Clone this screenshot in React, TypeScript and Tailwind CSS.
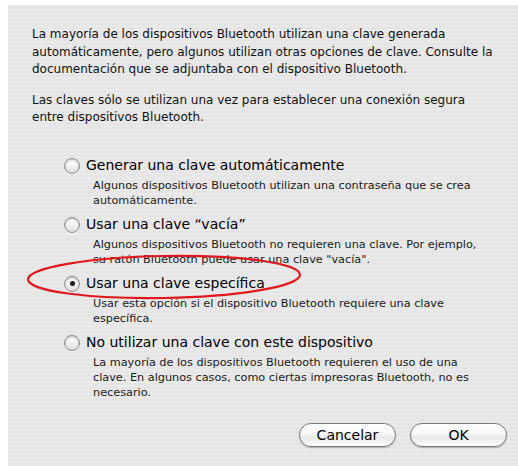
import React from "react";

const font = { fontFamily: '"DejaVu Sans", Verdana, sans-serif' };

type OptionProps = {
  label: string;
  lines: string[];
  checked?: boolean;
};

function Radio({ checked }: { checked?: boolean }) {
  return (
    <div className="relative flex h-[16px] w-[16px] shrink-0 items-center justify-center rounded-full border border-[#8c8c8c] bg-[linear-gradient(180deg,#ffffff_0%,#f4f4f4_45%,#dedede_100%)] shadow-[inset_0_1px_2px_rgba(0,0,0,0.25),0_1px_0_rgba(255,255,255,0.8)]">
      {checked && <div className="h-[5px] w-[5px] rounded-full bg-[#1c1c1c]" />}
    </div>
  );
}

function Option({ label, lines, checked }: OptionProps) {
  return (
    <div className="flex flex-col">
      <div className="flex h-[24px] items-center">
        <Radio checked={checked} />
        <span className="ml-[6px] whitespace-nowrap text-[14px] text-black">
          {label}
        </span>
      </div>
      <div className="flex flex-col pl-[29px] text-[11.25px] leading-[15px] text-[#1a1a1a]">
        {lines.map((line) => (
          <span key={line} className="whitespace-nowrap">
            {line}
          </span>
        ))}
      </div>
    </div>
  );
}

function PillButton({ children }: { children: React.ReactNode }) {
  return (
    <button className="flex h-[24px] w-[97px] items-center justify-center rounded-full border border-[#7a7a7a] bg-[linear-gradient(180deg,#ffffff_0%,#f6f6f6_50%,#e9e9e9_55%,#fbfbfb_100%)] text-[14px] text-black shadow-[0_1px_1px_rgba(0,0,0,0.25)]">
      {children}
    </button>
  );
}

export default function App() {
  const options: OptionProps[] = [
    {
      label: "Generar una clave automáticamente",
      lines: [
        "Algunos dispositivos Bluetooth utilizan una contraseña que se crea",
        "automáticamente.",
      ],
    },
    {
      label: "Usar una clave \u201Cvacía\u201D",
      lines: [
        "Algunos dispositivos Bluetooth no requieren una clave. Por ejemplo,",
        "su ratón Bluetooth puede usar una clave \"vacía\".",
      ],
    },
    {
      label: "Usar una clave específica",
      checked: true,
      lines: [
        "Usar esta opción si el dispositivo Bluetooth requiere una clave",
        "específica.",
      ],
    },
    {
      label: "No utilizar una clave con este dispositivo",
      lines: [
        "La mayoría de los dispositivos Bluetooth requieren el uso de una",
        "clave. En algunos casos, como ciertas impresoras Bluetooth, no es",
        "necesario.",
      ],
    },
  ];

  return (
    <div className="relative flex h-[466px] w-[518px] flex-col bg-white" style={font}>
      <div className="ml-[8px] mt-[5px] flex flex-1 flex-col bg-[repeating-linear-gradient(180deg,#e9e9e9_0px,#e9e9e9_2px,#e5e5e5_2px,#e5e5e5_4px)] pl-[24px] pr-[11px] pt-[21px] pb-[19px]">
        <div className="flex flex-col text-[12px] leading-[17.5px] text-[#111]">
          <span className="whitespace-nowrap">
            La mayoría de los dispositivos Bluetooth utilizan una clave generada
          </span>
          <span className="whitespace-nowrap">
            automáticamente, pero algunos utilizan otras opciones de clave. Consulte la
          </span>
          <span className="whitespace-nowrap">
            documentación que se adjuntaba con el dispositivo Bluetooth.
          </span>
        </div>
        <div className="mt-[13px] flex flex-col text-[12px] leading-[17.5px] text-[#111]">
          <span className="whitespace-nowrap">
            Las claves sólo se utilizan una vez para establecer una conexión segura
          </span>
          <span className="whitespace-nowrap">entre dispositivos Bluetooth.</span>
        </div>

        <div className="ml-[32px] mt-[27px] flex flex-col gap-[5px]">
          {options.map((opt) => (
            <Option key={opt.label} {...opt} />
          ))}
        </div>

        <div className="mt-auto flex justify-end gap-[14px]">
          <PillButton>Cancelar</PillButton>
          <PillButton>OK</PillButton>
        </div>
      </div>

      {/* hand-drawn highlight around the selected choice */}
      <svg
        className="pointer-events-none absolute left-0 top-0"
        width={518}
        height={466}
        viewBox="0 0 518 466"
      >
        <ellipse
          cx={164}
          cy={277}
          rx={136}
          ry={21}
          transform="rotate(-1 164 277)"
          fill="none"
          stroke="#e3161b"
          strokeWidth={2.2}
        />
      </svg>
    </div>
  );
}
